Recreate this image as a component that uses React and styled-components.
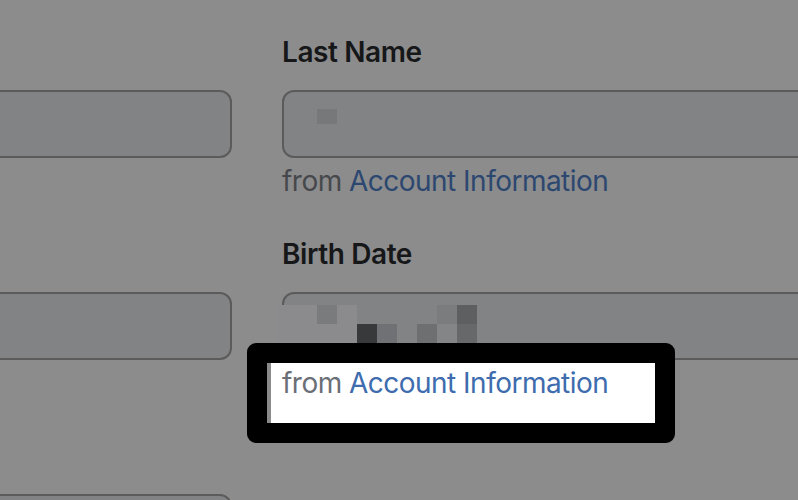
import React from "react";
import styled, { createGlobalStyle } from "styled-components";

const Global = createGlobalStyle`
  html, body { margin: 0; padding: 0; background: #8c8c8c; overflow: hidden; }
  body { font-family: Inter, "Noto Sans", sans-serif; }
`;

const Page = styled.div`
  width: 798px;
  height: 500px;
  overflow: hidden;
  background: #8c8c8c;
`;

const Form = styled.div`
  display: grid;
  grid-template-columns: 560px 560px;
  column-gap: 50px;
  row-gap: 36px;
  margin-left: -328px;
  padding-top: 32px;
`;

const Field = styled.div`
  display: flex;
  flex-direction: column;
`;

const Label = styled.div`
  font-size: 28px;
  font-weight: 600;
  line-height: 40px;
  height: 40px;
  color: #161719;
  margin-bottom: 18px;
  letter-spacing: -0.4px;
`;

const Input = styled.div`
  position: relative;
  box-sizing: border-box;
  height: 68px;
  border: 2px solid #5b5b5b;
  border-radius: 12px;
  background: #828385;
`;

const Helper = styled.div`
  position: relative;
  z-index: ${(p) => (p.$highlighted ? 1 : "auto")};
  box-sizing: border-box;
  padding-top: 3px;
  font-size: 28px;
  line-height: 40px;
  height: 40px;
  letter-spacing: -0.52px;
  color: ${(p) => (p.$highlighted ? "#6b6f77" : "#46484c")};
`;

const Link = styled.span`
  color: ${(p) => (p.$highlighted ? "#3e6cae" : "#2c4770")};
`;

const Spotlight = styled.div`
  position: absolute;
  z-index: -1;
  left: -35px;
  top: -17px;
  width: 428px;
  height: 100px;
  box-sizing: border-box;
  border: 20px solid #000;
  border-radius: 9px;
  background: #fff;
  box-shadow: inset 4px 0 0 #8a8a8a;
`;

const Redaction = styled.div`
  position: absolute;
  left: ${(p) => p.$x}px;
  top: ${(p) => p.$y}px;
  display: grid;
  grid-template-columns: repeat(${(p) => p.$cols}, 20px);
  grid-auto-rows: ${(p) => p.$rowH || 20}px;
`;

const Cell = styled.div`
  background: ${(p) => p.$c || "transparent"};
`;

const L = "#8b8b8d";

const birthCells = [
  // row 1
  L, L, "#7a7b7d", L, null, null, null, null, "#7b7c7e", "#5e5f61",
  // row 2
  L, L, L, L, "#38393b", "#707174", null, "#6e6f71", "#848587", "#67686a",
];

export default function App() {
  return (
    <Page>
      <Global />
      <Form>
        <Field>
          <Label />
          <Input />
        </Field>
        <Field>
          <Label>Last Name</Label>
          <Input>
            <Redaction $x={33} $y={17} $cols={1} $rowH={15}>
              <Cell $c="#77787a" />
            </Redaction>
          </Input>
          <Helper>
            from <Link>Account Information</Link>
          </Helper>
        </Field>
        <Field>
          <Label />
          <Input />
        </Field>
        <Field>
          <Label>Birth Date</Label>
          <Input>
            <Redaction $x={-7} $y={11} $cols={10} $rowH={19}>
              {birthCells.map((c, i) => (
                <Cell key={i} $c={c} />
              ))}
            </Redaction>
          </Input>
          <Helper $highlighted>
            <Spotlight />
            from <Link $highlighted>Account Information</Link>
          </Helper>
        </Field>
        <Field>
          <Label />
          <Input />
        </Field>
        <Field />
      </Form>
    </Page>
  );
}
